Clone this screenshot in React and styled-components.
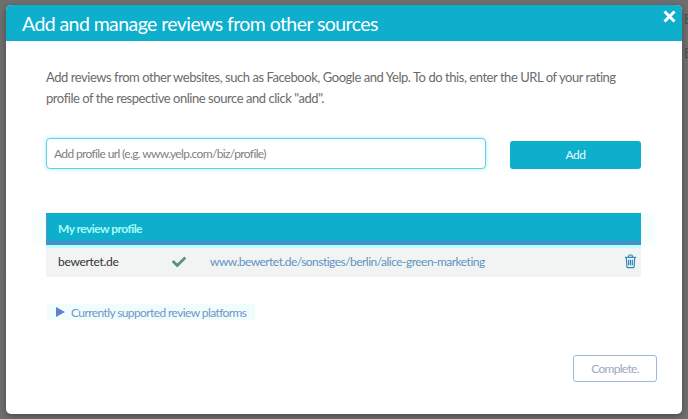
import React from "react";
import styled, { createGlobalStyle } from "styled-components";
import { FaCheck } from "react-icons/fa";

const GlobalStyle = createGlobalStyle`
  html, body {
    margin: 0;
    height: 100%;
    background: #6f6f6f;
    font-family: "Lato", "Noto Sans", sans-serif;
    overflow: hidden;
  }
`;

export default function App() {
  return (
    <Backdrop>
      <GlobalStyle />
      <PeekLetter $x={684} $y={11}>E</PeekLetter>
      <PeekLetter $x={684} $y={45}>E</PeekLetter>
      <PeekLetter $x={-5} $y={267}>J</PeekLetter>
      <Modal>
        <Header>
          <Title>Add and manage reviews from other sources</Title>
          <Close aria-label="close">
            <svg width="13" height="13" viewBox="0 0 13 13">
              <path d="M1.5 1.5l10 10M11.5 1.5l-10 10" stroke="#fff" strokeWidth="3" />
            </svg>
          </Close>
        </Header>
        <Body>
          <Intro>
            Add reviews from other websites, such as Facebook, Google and Yelp. To do this, enter the URL of your rating
            profile of the respective online source and click "add".
          </Intro>
          <AddRow>
            <UrlInput placeholder="Add profile url (e.g. www.yelp.com/biz/profile)" />
            <AddButton>Add</AddButton>
          </AddRow>
          <Table>
            <TableHead>My review profile</TableHead>
            <TableRow>
              <Source>bewertet.de</Source>
              <Status>
                <FaCheck />
              </Status>
              <ProfileLink>www.bewertet.de/sonstiges/berlin/alice-green-marketing</ProfileLink>
              <Trash viewBox="0 0 14 16" width="13" height="15">
                <path
                  d="M1 3.500h12M5 3.500V2a1 1 0 0 1 1-1h2a1 1 0 0 1 1 1v1.500M2.500 3.500l.6 10a1.200 1.200 0 0 0 1.200 1.100h5.400a1.200 1.200 0 0 0 1.200-1.100l.6-10M5 6v6M7 6v6M9 6v6"
                  fill="none"
                  stroke="#2d8db8"
                  strokeWidth="1.300"
                />
              </Trash>
            </TableRow>
          </Table>
          <Platforms>
            <Arrow />
            <span>Currently supported review platforms</span>
          </Platforms>
          <Footer>
            <CompleteButton>Complete.</CompleteButton>
          </Footer>
        </Body>
      </Modal>
    </Backdrop>
  );
}

const Backdrop = styled.div`
  position: relative;
  box-sizing: border-box;
  width: 688px;
  height: 419px;
  padding: 5px 6px;
  overflow: hidden;
`;

const PeekLetter = styled.span`
  position: absolute;
  left: ${(p) => p.$x}px;
  top: ${(p) => p.$y}px;
  color: #3f4f4f;
  font-size: 13px;
`;

const Modal = styled.div`
  position: relative;
  height: 409px;
  background: #fff;
  border-radius: 5px;
  overflow: hidden;
  display: flex;
  flex-direction: column;
  box-shadow: 0 2px 6px rgba(0, 0, 0, 0.35);
`;

const Header = styled.div`
  flex: none;
  height: 36px;
  padding: 0 6px 0 16px;
  background: #0eaecd;
  color: #fff;
  display: flex;
  align-items: flex-start;
  justify-content: space-between;
`;

const Title = styled.h1`
  margin: 0;
  font-size: 19.500px;
  font-weight: 400;
  letter-spacing: -0.580px;
  line-height: 37px;
`;

const Close = styled.button`
  border: 0;
  padding: 5px 0 0;
  background: none;
  line-height: 0;
`;

const Body = styled.div`
  flex: 1;
  display: flex;
  flex-direction: column;
  padding: 26px 40px 0;
`;

const Intro = styled.p`
  margin: 0;
  font-size: 13px;
  letter-spacing: -0.450px;
  line-height: 21px;
  color: #6b6b6b;
`;

const AddRow = styled.div`
  display: flex;
  align-items: center;
  gap: 24px;
  margin-top: 29px;
`;

const UrlInput = styled.input`
  box-sizing: border-box;
  width: 440px;
  height: 31px;
  padding: 0 7px;
  border: 1px solid #5fd3e3;
  border-radius: 4px;
  box-shadow: 0 0 4px #a6e9f2;
  outline: none;
  font: 12px "Lato", sans-serif;
  letter-spacing: -0.640px;
  &::placeholder {
    color: #808080;
    opacity: 1;
  }
`;

const AddButton = styled.button`
  width: 131px;
  height: 28px;
  margin-top: 2px;
  border: 0;
  border-radius: 3px;
  background: #0eaecd;
  color: #e8fbff;
  font: 12px "Lato", sans-serif;
  letter-spacing: -0.500px;
`;

const Table = styled.div`
  margin-top: 44px;
  margin-right: 1px;
`;

const TableHead = styled.div`
  box-sizing: border-box;
  height: 32px;
  padding-left: 11px;
  background: #0eaecd;
  border-left: 1px solid #5f8fc8;
  border-bottom: 4px solid #4a90c8;
  box-shadow: 0 3px 0 #b8ffff, -14px 0 0 #f6fefe, 14px 0 0 #f6fefe;
  color: #a8fbf8;
  font-size: 12px;
  font-weight: 700;
  letter-spacing: -0.550px;
  line-height: 32px;
`;

const TableRow = styled.div`
  box-sizing: border-box;
  height: 29px;
  margin-top: 3px;
  background: #f2f3f3;
  display: flex;
  align-items: center;
  padding: 0 4px 2px 12px;
  font-size: 12px;
  letter-spacing: -0.530px;
`;

const Source = styled.span`
  width: 114px;
  color: #333;
  letter-spacing: -0.300px;
`;

const Status = styled.span`
  width: 38px;
  color: #55967a;
  font-size: 14px;
  line-height: 0;
`;

const ProfileLink = styled.span`
  flex: 1;
  color: #5f93c4;
`;

const Trash = styled.svg`
  flex: none;
`;

const Platforms = styled.div`
  align-self: flex-start;
  display: flex;
  align-items: center;
  gap: 6px;
  height: 16px;
  margin: 27px 0 0 1px;
  padding: 0 9px;
  background: #f1fdfd;
  color: #6f96c8;
  font-size: 12px;
  letter-spacing: -0.600px;
`;

const Arrow = styled.i`
  width: 0;
  height: 0;
  border-left: 9px solid #5f7fd0;
  border-top: 5px solid transparent;
  border-bottom: 5px solid transparent;
`;

const Footer = styled.div`
  display: flex;
  justify-content: flex-end;
  margin: 35px -15px 0 0;
`;

const CompleteButton = styled.button`
  width: 84px;
  height: 27px;
  border: 1px solid #9fb8d8;
  border-radius: 3px;
  background: #fff;
  color: #9aaac0;
  font: 12px "Lato", sans-serif;
  letter-spacing: -0.700px;
`;
